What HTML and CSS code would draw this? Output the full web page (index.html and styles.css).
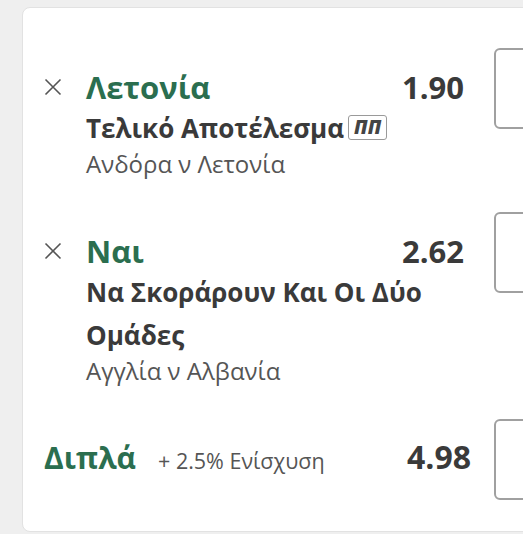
FILE: index.html
```html
<!DOCTYPE html>
<html lang="el">
<head>
<meta charset="utf-8">
<link rel="stylesheet" href="styles.css">
</head>
<body>
<div class="page">
  <div class="card">
    <div class="sel sel-first">
      <div class="sel-main">
        <div class="head">
          <span class="remove"><svg viewBox="0 0 18 18" width="18" height="18"><path d="M1.5 1.5 L16.5 16.5 M16.5 1.5 L1.5 16.5" stroke="#555" stroke-width="1.6" fill="none"/></svg></span>
          <span class="title">Λετονία</span>
          <span class="odds">1.90</span>
        </div>
        <div class="market">Τελικό Αποτέλεσμα<span class="badge">ΠΠ</span></div>
        <div class="event">Ανδόρα ν Λετονία</div>
      </div>
      <div class="stake"></div>
    </div>
    <div class="sel sel-next">
      <div class="sel-main">
        <div class="head">
          <span class="remove"><svg viewBox="0 0 18 18" width="18" height="18"><path d="M1.5 1.5 L16.5 16.5 M16.5 1.5 L1.5 16.5" stroke="#555" stroke-width="1.6" fill="none"/></svg></span>
          <span class="title">Ναι</span>
          <span class="odds">2.62</span>
        </div>
        <div class="market">Να Σκοράρουν Και Οι Δύο Ομάδες</div>
        <div class="event">Αγγλία ν Αλβανία</div>
      </div>
      <div class="stake"></div>
    </div>
    <div class="sel sel-next multi">
      <div class="multi-main">
        <span class="multi-title">Διπλά</span>
        <span class="boost">+ 2.5% Ενίσχυση</span>
        <span class="multi-odds">4.98</span>
      </div>
      <div class="stake"></div>
    </div>
  </div>
</div>
</body>
</html>
```
FILE: styles.css
```css
html, body {
  margin: 0;
  padding: 0;
  background: #efefef;
  overflow: hidden;
}
body {
  width: 523px;
  height: 534px;
  font-family: "Open Sans", "Noto Sans", sans-serif;
  color: #3a3a3a;
}
.page {
  padding: 7px 0 0 22px;
}
.card {
  width: 600px;
  height: 525px;
  box-sizing: border-box;
  background: #fff;
  border: 1px solid #e2e2e2;
  border-radius: 8px;
  padding: 40px 0 0 21px;
}
.sel {
  display: flex;
  align-items: flex-start;
}
.sel-next {
  margin-top: 34px;
}
.sel-main {
  width: 420px;
  flex-shrink: 0;
  padding-top: 19px;
}
.head {
  display: flex;
  align-items: center;
  height: 40px;
}
.remove {
  width: 42px;
  display: flex;
  align-items: center;
}
.remove svg {
  display: block;
}
.title {
  flex: 1;
  font-size: 31px;
  font-weight: 700;
  line-height: 40px;
  color: #2b6e4f;
}
.odds {
  font-size: 31px;
  font-weight: 700;
  line-height: 40px;
  color: #3a3a3a;
}
.market {
  margin-left: 42px;
  font-size: 26px;
  font-weight: 700;
  line-height: 43px;
  color: #3a3a3a;
}
.badge {
  display: inline-block;
  margin-left: 4px;
  padding: 0 5px;
  height: 23px;
  line-height: 23px;
  border: 1.5px solid #9a9a9a;
  border-radius: 3px;
  font-size: 19px;
  font-style: italic;
  font-weight: 800;
  color: #444;
  vertical-align: 4.5px;
}
.event {
  margin-left: 42px;
  font-size: 24px;
  line-height: 28px;
  color: #555;
}
.stake {
  width: 80px;
  height: 77px;
  margin-left: 30px;
  border: 2px solid #a0a0a0;
  border-radius: 6px;
  flex-shrink: 0;
}
.multi-main {
  width: 427px;
  flex-shrink: 0;
  box-sizing: border-box;
  height: 81px;
  padding-top: 18px;
  display: flex;
  align-items: baseline;
}
.multi-title {
  font-size: 30px;
  font-weight: 700;
  line-height: 40px;
  color: #2b6e4f;
}
.boost {
  flex: 1;
  margin-left: 22px;
  font-size: 21.5px;
  color: #555;
}
.multi-odds {
  font-size: 32px;
  font-weight: 700;
  line-height: 40px;
  color: #3a3a3a;
}
.multi .stake {
  margin-left: 23px;
}
```
